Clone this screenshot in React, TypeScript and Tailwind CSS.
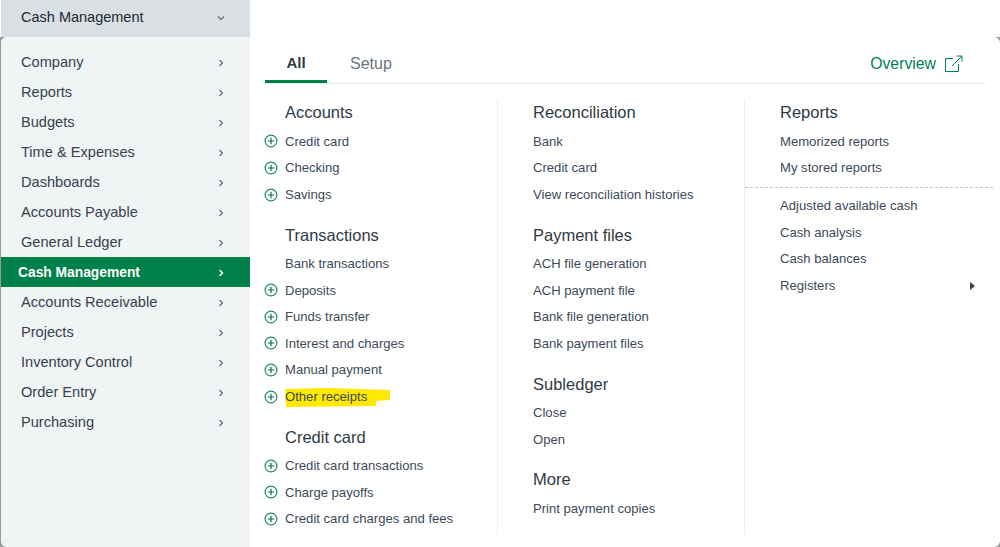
const navItems = [
  "Company",
  "Reports",
  "Budgets",
  "Time & Expenses",
  "Dashboards",
  "Accounts Payable",
  "General Ledger",
  "Cash Management",
  "Accounts Receivable",
  "Projects",
  "Inventory Control",
  "Order Entry",
  "Purchasing",
];

type Row = { label: string; add?: boolean; mark?: boolean; more?: boolean };
type Section = { title: string; rows: Row[] };

const col1: Section[] = [
  {
    title: "Accounts",
    rows: [
      { label: "Credit card", add: true },
      { label: "Checking", add: true },
      { label: "Savings", add: true },
    ],
  },
  {
    title: "Transactions",
    rows: [
      { label: "Bank transactions" },
      { label: "Deposits", add: true },
      { label: "Funds transfer", add: true },
      { label: "Interest and charges", add: true },
      { label: "Manual payment", add: true },
      { label: "Other receipts", add: true, mark: true },
    ],
  },
  {
    title: "Credit card",
    rows: [
      { label: "Credit card transactions", add: true },
      { label: "Charge payoffs", add: true },
      { label: "Credit card charges and fees", add: true },
    ],
  },
];

const col2: Section[] = [
  {
    title: "Reconciliation",
    rows: [{ label: "Bank" }, { label: "Credit card" }, { label: "View reconciliation histories" }],
  },
  {
    title: "Payment files",
    rows: [
      { label: "ACH file generation" },
      { label: "ACH payment file" },
      { label: "Bank file generation" },
      { label: "Bank payment files" },
    ],
  },
  { title: "Subledger", rows: [{ label: "Close" }, { label: "Open" }] },
  { title: "More", rows: [{ label: "Print payment copies" }] },
];

const reportRows: Row[] = [{ label: "Memorized reports" }, { label: "My stored reports" }];
const extraRows: Row[] = [
  { label: "Adjusted available cash" },
  { label: "Cash analysis" },
  { label: "Cash balances" },
  { label: "Registers", more: true },
];

const Chevron = ({ down, white }: { down?: boolean; white?: boolean }) => (
  <svg
    width="8"
    height="8"
    viewBox="0 0 8 8"
    fill="none"
    stroke={white ? "#ffffff" : "#56687a"}
    strokeWidth={white ? "1.4" : "1.1"}
  >
    <path d={down ? "M1 2.5 4 5.5 7 2.5" : "M2.5 1 5.5 4 2.5 7"} />
  </svg>
);

const PlusIcon = () => (
  <svg width="14" height="14" viewBox="0 0 14 14" fill="none" className="absolute left-[-21px] top-[6px]">
    <circle cx="7" cy="7" r="5.9" stroke="#1f8a66" strokeWidth="1.2" />
    <path d="M7 3.7v6.6M3.7 7h6.6" stroke="#00704a" strokeWidth="1.2" />
  </svg>
);

const Highlight = () => (
  <svg
    width="106"
    height="19"
    viewBox="0 0 106 19"
    className="absolute left-0 top-[4px]"
  >
    <path d="M0 1 42 0 105 2V12L91 13V18L1 19Z" fill="#ffe900" />
  </svg>
);

const LinkRow = ({ row }: { row: Row }) => (
  <div className="relative flex h-[26.6px] items-center justify-between pr-[11px] text-[13.1px] text-[#3c4a5a]">
    {row.add && <PlusIcon />}
    {row.mark && <Highlight />}
    <span className="relative">{row.label}</span>
    {row.more && <span className="h-0 w-0 border-y-[4px] border-l-[5px] border-y-transparent border-l-[#444]" />}
  </div>
);

const Heading = ({ title }: { title: string }) => (
  <div className="flex h-[31px] items-center text-[16.5px] text-[#2f3a45]">{title}</div>
);

const MenuSection = ({ section }: { section: Section }) => (
  <div className="mb-[11.5px]">
    <Heading title={section.title} />
    {section.rows.map((row) => (
      <LinkRow key={row.label} row={row} />
    ))}
  </div>
);

export default function App() {
  return (
    <div className="flex h-[547px] w-[1000px] flex-col overflow-hidden bg-white font-['Liberation_Sans',Arial,sans-serif]">
      <div className="ml-px flex h-[37px] w-[249px] shrink-0 items-center justify-between bg-[#d9dfe2] pb-[2px] pl-[20px] pr-[25px] text-[14.5px] text-[#1d2833]">
        <span>Cash Management</span>
        <Chevron down />
      </div>

      <div className="flex min-h-0 flex-1 bg-[#9a9a9a]">
        <div className="ml-px flex min-w-0 flex-1 overflow-hidden rounded-[6px] bg-white">
          <nav className="w-[249px] shrink-0 bg-[#f0f4f5] pt-[10px]">
            {navItems.map((item) => {
              const active = item === "Cash Management";
              return (
                <div
                  key={item}
                  className={
                    active
                      ? "flex h-[30px] items-center justify-between bg-[#00804a] pl-[17px] pr-[25px] pt-[2px] text-[13.8px] font-bold text-white"
                      : "flex h-[30px] items-center justify-between pl-[20px] pr-[25px] pt-px text-[14.6px] text-[#36424e]"
                  }
                >
                  <span>{item}</span>
                  <Chevron white={active} />
                </div>
              );
            })}
          </nav>

          <main className="min-w-0 flex-1 pl-[15px] pr-[14px]">
            <div className="flex h-[47px] items-end justify-between border-b border-[#e8eaec]">
              <div className="flex">
                <div className="flex h-[36px] w-[62px] items-center justify-center border-b-[3px] border-[#00804a] pb-px text-[15px] font-bold text-[#2f3a45]">
                  All
                </div>
                <div className="flex h-[36px] items-center pb-[2px] pl-[23px] text-[16px] text-[#6b7480]">Setup</div>
              </div>
              <div className="flex h-[36px] items-center gap-[8px] pb-[2px] pr-[23px] text-[15.8px] text-[#00805a]">
                <span>Overview</span>
                <svg width="19" height="18" viewBox="0 0 19 18" fill="none" stroke="#00805a" strokeWidth="1">
                  <path d="M9 3.5H1.5v13h13V9M8 11 18 1M12.5 1H18V6.5" />
                </svg>
              </div>
            </div>

            <div className="ml-[-15px] mt-[15px] flex h-[436px]">
              <div className="w-[248px] border-r border-[#eeeeee] pl-[35px]">
                <div className="mt-[-1.7px]">
                  {col1.map((section) => (
                    <MenuSection key={section.title} section={section} />
                  ))}
                </div>
              </div>
              <div className="w-[247px] border-r border-[#eeeeee] pl-[35px]">
                <div className="mt-[-1.7px]">
                  {col2.map((section) => (
                    <MenuSection key={section.title} section={section} />
                  ))}
                </div>
              </div>
              <div className="min-w-0 flex-1">
                <div className="mt-[-1.7px]">
                  <div className="pl-[35px]">
                    <Heading title="Reports" />
                    {reportRows.map((row) => (
                      <LinkRow key={row.label} row={row} />
                    ))}
                  </div>
                  <div className="mb-[4.6px] mr-[-7px] mt-[5.4px] border-t border-dashed border-[#c4c8cc]" />
                  <div className="pl-[35px]">
                    {extraRows.map((row) => (
                      <LinkRow key={row.label} row={row} />
                    ))}
                  </div>
                </div>
              </div>
            </div>
          </main>
        </div>
      </div>
    </div>
  );
}
